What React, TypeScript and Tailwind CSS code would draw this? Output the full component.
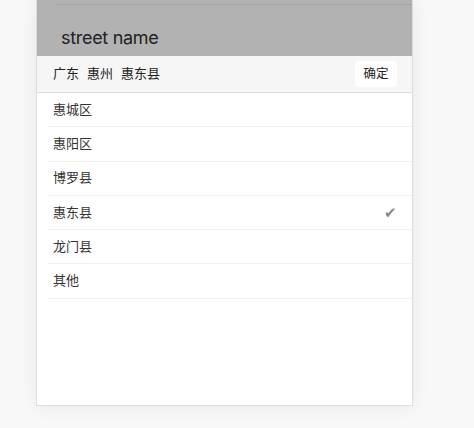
export default function App() {
  const items = ["惠城区", "惠阳区", "博罗县", "惠东县", "龙门县", "其他"];
  return (
    <div
      className="w-[474px] h-[428px] bg-[#f8f8f8] overflow-hidden"
      style={{ fontFamily: '"Noto Sans", "Noto Sans CJK SC", sans-serif' }}
    >
      <div className="ml-[36px] w-[377px] h-[406px] bg-white border border-t-0 border-[#dcdcdc] shadow-[0_0_18px_rgba(0,0,0,0.07)] flex flex-col">
        <div className="h-[56px] bg-[#b2b2b2] flex flex-col">
          <div className="mt-[4px] ml-[19px] border-t border-[#a2a2a2]" />
          <div
            className="mt-[22px] ml-[24px] text-[18px] leading-[22px] text-[#222] tracking-[-0.3px]"
            style={{ fontFamily: '"Inter", "Liberation Sans", sans-serif' }}
          >
            street name
          </div>
        </div>
        <div className="h-[37px] bg-[#f6f6f6] border-b border-[#dddddd] flex items-center justify-between pl-[16px] pr-[15px]">
          <div className="flex gap-[8px] text-[13px] text-[#222]">
            <span>广东</span>
            <span>惠州</span>
            <span>惠东县</span>
          </div>
          <div className="w-[42px] h-[26px] bg-white rounded-[3px] flex items-center justify-center text-[12.5px] text-[#222]">
            确定
          </div>
        </div>
        <div className="flex flex-col">
          {items.map((it) => (
            <div
              key={it}
              className="ml-[10px] pl-[6px] pr-[15px] h-[34.3px] border-b border-[#f0f0f0] flex items-center justify-between text-[13px] text-[#333]"
            >
              <span>{it}</span>
              {it === "惠东县" && (
                <span className="text-[#888] text-[15px] leading-none">✔</span>
              )}
            </div>
          ))}
        </div>
      </div>
    </div>
  );
}
